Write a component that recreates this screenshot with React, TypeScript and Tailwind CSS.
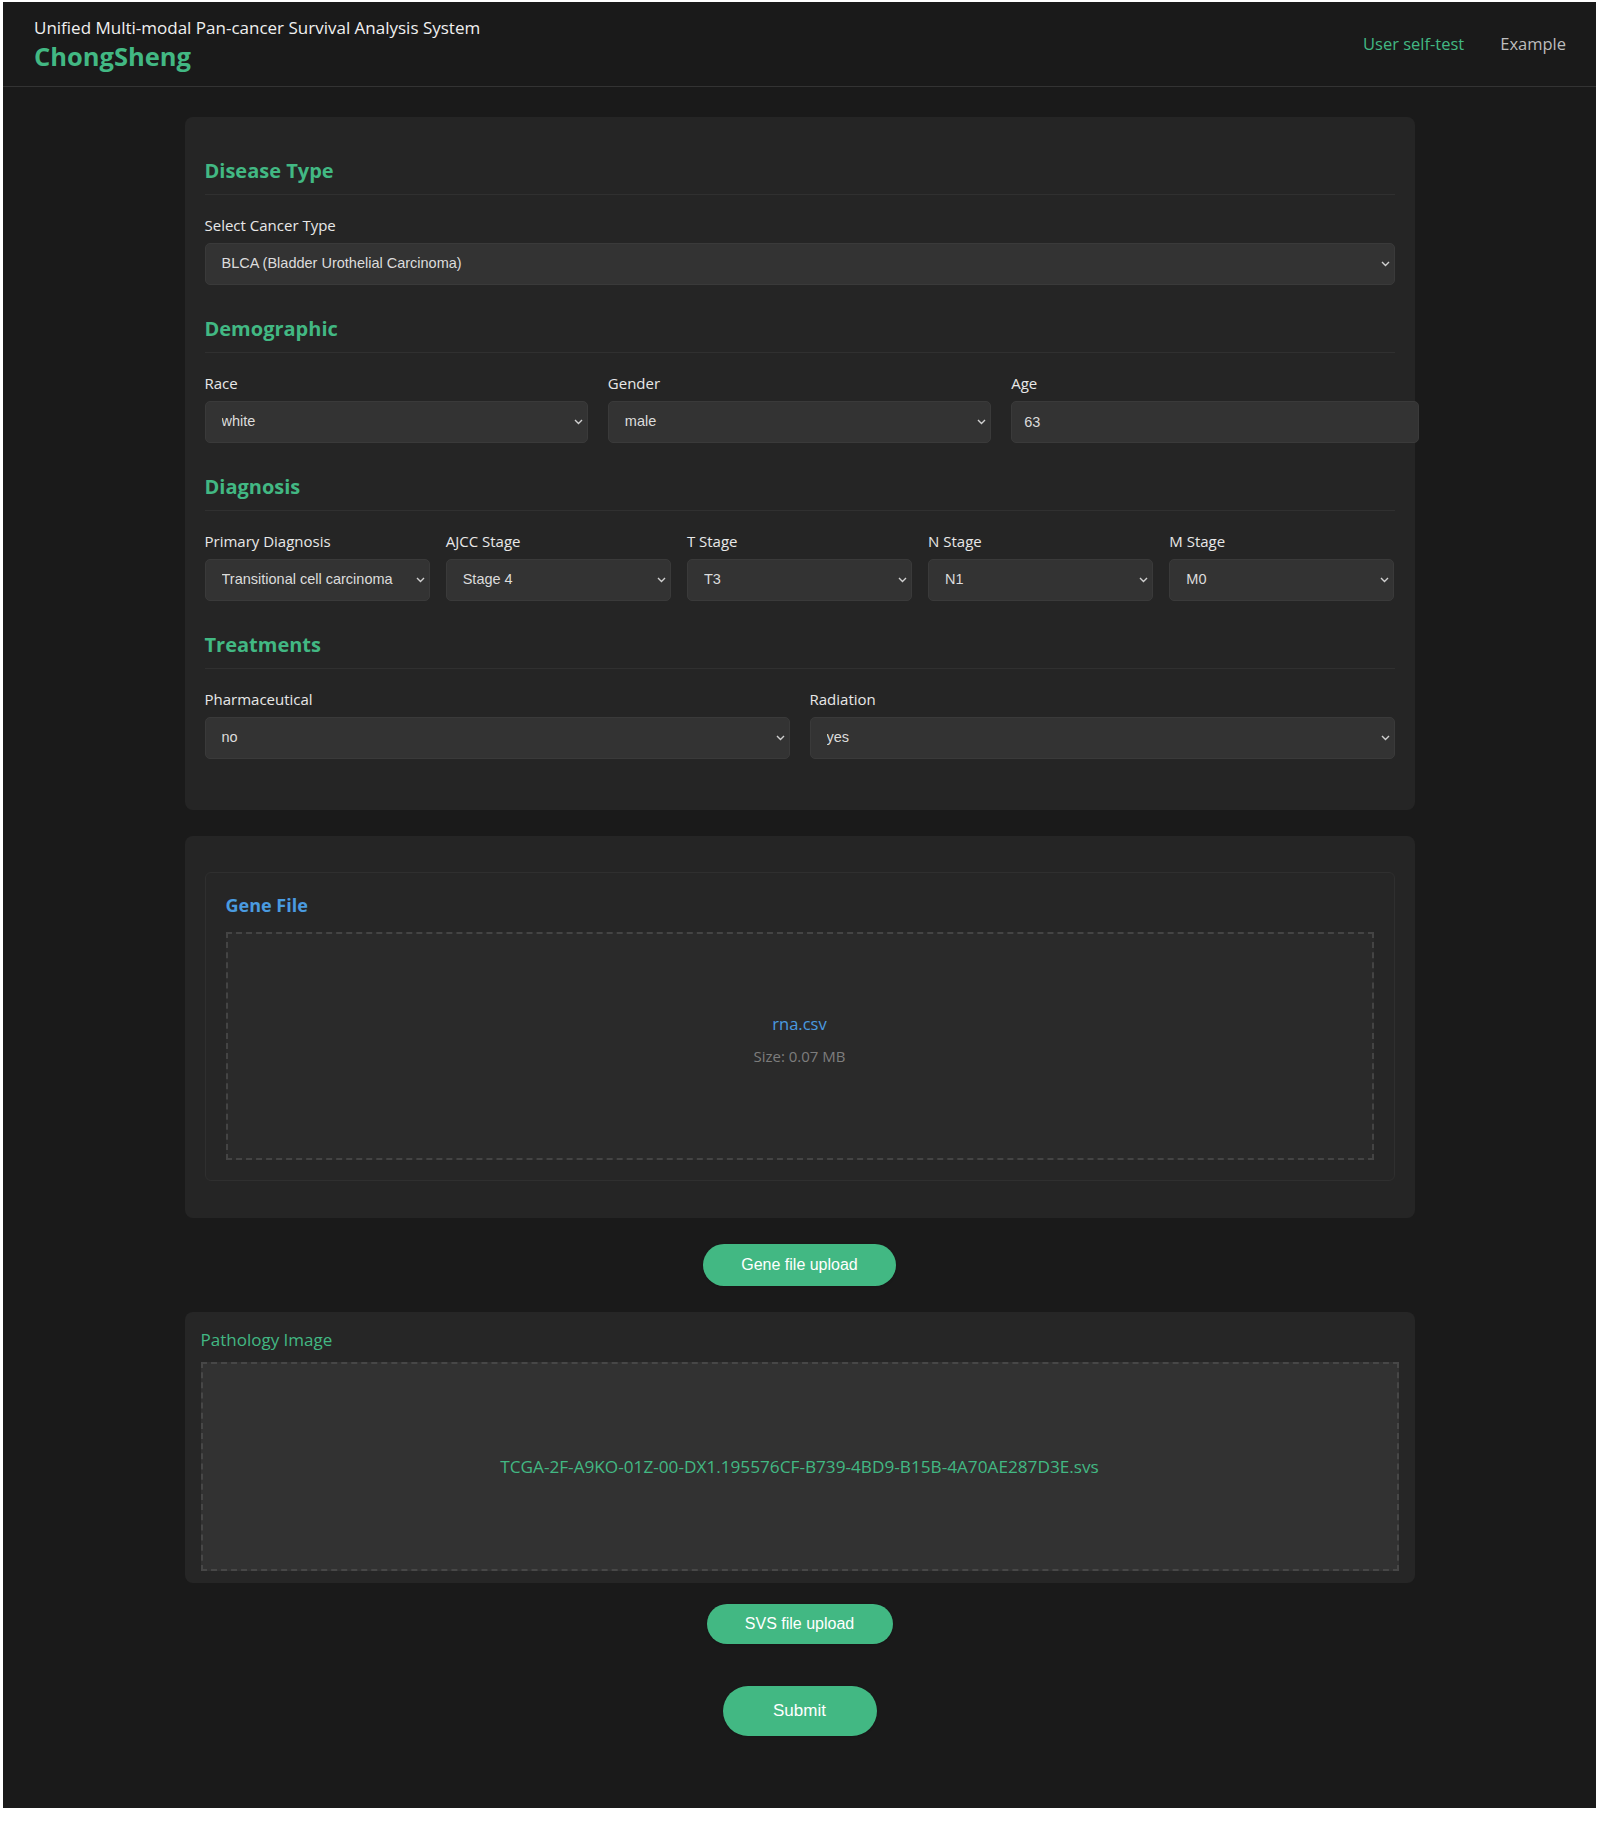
const cancerTypes = ["BLCA (Bladder Urothelial Carcinoma)"];

function Chevron() {
  return (
    <svg
      className="pointer-events-none absolute right-[5px] top-1/2 -translate-y-1/2"
      width="9"
      height="6"
      viewBox="0 0 9 6"
      fill="none"
    >
      <path d="M1 1l3.5 3.5L8 1" stroke="#d0d0d0" strokeWidth="1.4" />
    </svg>
  );
}

function Select({ value }: { value: string }) {
  return (
    <div className="relative">
      <select
        defaultValue={value}
        className="h-[42px] w-full appearance-none rounded-[5px] border border-[#3a3a3a] bg-[#333333] pl-[16px] pr-8 font-['Liberation_Sans',Arial,sans-serif] text-[14.5px] text-[#dcdcdc] outline-none"
      >
        <option value={value}>{value}</option>
      </select>
      <Chevron />
    </div>
  );
}

function Field({ label, children }: { label: string; children: React.ReactNode }) {
  return (
    <div className="flex flex-col">
      <label className="mb-2 h-5 text-[15px] leading-5 text-[#e8e8e8]">{label}</label>
      {children}
    </div>
  );
}

function Section({ title, children }: { title: string; children: React.ReactNode }) {
  return (
    <section>
      <h3 className="border-b border-[#303030] pb-[9px] text-[20px] leading-7 font-bold text-[#42b883]">
        {title}
      </h3>
      <div className="mt-5">{children}</div>
    </section>
  );
}

export default function App() {
  return (
    <div className="min-h-screen bg-white px-[3px] pt-[2px] font-['Open_Sans',sans-serif]">
      <div className="h-[1806px] bg-[#1a1a1a]">
        <header className="flex h-[85px] items-center justify-between border-b border-[#333] pl-[31px] pr-[30px]">
          <div className="flex flex-col">
            <span className="text-[17px] leading-6 text-[#f0f0f0]">
              Unified Multi-modal Pan-cancer Survival Analysis System
            </span>
            <span className="text-[25.5px] leading-8 font-bold text-[#42b883]">ChongSheng</span>
          </div>
          <nav className="flex items-center gap-[36px] text-[16.5px]">
            <a className="text-[#42b883]">User self-test</a>
            <a className="text-[#bdbdbd]">Example</a>
          </nav>
        </header>

        <main className="flex flex-col items-center pt-[30px]">
          <div className="w-[1230px] rounded-lg bg-[#252525] px-5 pt-10 pb-[51px]">
            <div className="flex flex-col gap-[30px]">
              <Section title="Disease Type">
                <Field label="Select Cancer Type">
                  <Select value={cancerTypes[0]} />
                </Field>
              </Section>

              <Section title="Demographic">
                <div className="grid grid-cols-3 gap-5">
                  <Field label="Race">
                    <Select value="white" />
                  </Field>
                  <Field label="Gender">
                    <Select value="male" />
                  </Field>
                  <Field label="Age">
                    <input
                      defaultValue="63"
                      className="h-[42px] w-[calc(100%+24px)] rounded-[5px] border border-[#3a3a3a] bg-[#333333] px-3 font-['Liberation_Sans',Arial,sans-serif] text-[14.5px] text-[#dcdcdc] outline-none"
                    />
                  </Field>
                </div>
              </Section>

              <Section title="Diagnosis">
                <div className="grid grid-cols-5 gap-4">
                  <Field label="Primary Diagnosis">
                    <Select value="Transitional cell carcinoma" />
                  </Field>
                  <Field label="AJCC Stage">
                    <Select value="Stage 4" />
                  </Field>
                  <Field label="T Stage">
                    <Select value="T3" />
                  </Field>
                  <Field label="N Stage">
                    <Select value="N1" />
                  </Field>
                  <Field label="M Stage">
                    <Select value="M0" />
                  </Field>
                </div>
              </Section>

              <Section title="Treatments">
                <div className="grid grid-cols-2 gap-5">
                  <Field label="Pharmaceutical">
                    <Select value="no" />
                  </Field>
                  <Field label="Radiation">
                    <Select value="yes" />
                  </Field>
                </div>
              </Section>
            </div>
          </div>

          <div className="mt-[26px] w-[1230px] rounded-lg bg-[#252525] px-5 pt-9 pb-[37px]">
            <div className="rounded-md border border-[#2f2f2f] bg-[#262626] p-5">
              <h3 className="mb-[15px] text-[18px] leading-6 font-bold text-[#4a9be0]">Gene File</h3>
              <div className="flex h-[228px] flex-col items-center justify-center border-2 border-dashed border-[#444] bg-[#2a2a2a] pb-[14px]">
                <span className="text-[16.5px] leading-6 text-[#4a9be0]">rna.csv</span>
                <span className="mt-[10px] text-[15px] leading-5 text-[#7d7d7d]">Size: 0.07 MB</span>
              </div>
            </div>
          </div>

          <button className="mt-[26px] h-[42px] w-[193px] rounded-full bg-[#42b883] font-['Liberation_Sans',Arial,sans-serif] text-[16px] text-white shadow-sm">
            Gene file upload
          </button>

          <div className="mt-[26px] w-[1230px] rounded-lg bg-[#262626] px-4 pt-4 pb-3">
            <div className="mb-[10px] text-[17px] leading-6 text-[#42b883]">Pathology Image</div>
            <div className="flex h-[209px] items-center justify-center border-2 border-dashed border-[#474747] bg-[#323232]">
              <span className="text-[17.2px] text-[#42b883]">
                TCGA-2F-A9KO-01Z-00-DX1.195576CF-B739-4BD9-B15B-4A70AE287D3E.svs
              </span>
            </div>
          </div>

          <button className="mt-[21px] h-[40px] w-[186px] rounded-full bg-[#42b883] font-['Liberation_Sans',Arial,sans-serif] text-[16px] text-white shadow-sm">
            SVS file upload
          </button>

          <button className="mt-[42px] h-[50px] w-[154px] rounded-full bg-[#42b883] font-['Liberation_Sans',Arial,sans-serif] text-[17px] text-white shadow-sm">
            Submit
          </button>
        </main>
      </div>
    </div>
  );
}
